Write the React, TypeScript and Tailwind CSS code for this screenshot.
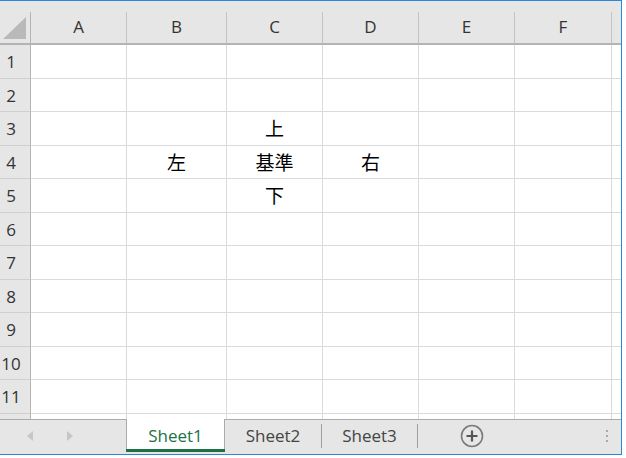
import React from "react";

const cols = [
  { l: "A", w: "w-[96px]" },
  { l: "B", w: "w-[100px]" },
  { l: "C", w: "w-[96px]" },
  { l: "D", w: "w-[96px]" },
  { l: "E", w: "w-[96px]" },
  { l: "F", w: "w-[97px]" },
];

const data: Record<string, string> = {
  "3C": "上",
  "4B": "左",
  "4C": "基準",
  "4D": "右",
  "5C": "下",
};

const latin = { fontFamily: '"Open Sans", "DejaVu Sans", sans-serif' };
const cjk = { fontFamily: '"Noto Sans CJK JP", "Noto Sans", sans-serif' };

export default function App() {
  const rows = Array.from({ length: 12 }, (_, i) => i + 1);
  return (
    <div className="w-[626px] h-[458px] bg-white overflow-hidden">
      <div className="w-[622px] h-[455px] border-t border-r border-b border-[#2b88d8] flex flex-col overflow-hidden">
        {/* column header */}
        <div className="flex h-[44px] shrink-0 bg-[#e6e6e6] border-b-2 border-[#b4b4b4]">
          <div className="w-[31px] shrink-0 flex">
            <div className="flex-1 flex items-start">
              <svg width="30" height="42" viewBox="0 0 30 42" className="shrink-0">
                <polygon points="3,38 26,38 26,16" fill="#b9b9b9" />
              </svg>
            </div>
            <div className="w-px h-[31px] self-end bg-[#b4b4b4]" />
          </div>
          {cols.map((c) => (
            <div key={c.l} className={`${c.w} shrink-0 flex`}>
              <div
                className="flex-1 flex items-center justify-center pt-[10px] text-[17px] text-[#333]"
                style={latin}
              >
                {c.l}
              </div>
              <div className="w-px h-[31px] self-end bg-[#c4c4c4]" />
            </div>
          ))}
          <div className="flex-1" />
        </div>

        {/* grid */}
        <div className="h-[374px] shrink-0 overflow-hidden flex flex-col">
          {rows.map((r) => (
            <div key={r} className="flex h-[33.5px] shrink-0">
              <div className="w-[31px] shrink-0 bg-[#e6e6e6] border-r border-b border-r-[#b4b4b4] border-b-[#cfcfcf] flex items-center">
                <div
                  className="w-[22px] text-center text-[17px] leading-none text-[#333] pt-[1px]"
                  style={latin}
                >
                  {r < 12 ? r : ""}
                </div>
              </div>
              {cols.map((c) => (
                <div
                  key={c.l}
                  className={`${c.w} shrink-0 border-r border-b border-[#dadada] flex items-center justify-center text-[19px] text-black`}
                  style={cjk}
                >
                  {data[`${r}${c.l}`] ?? ""}
                </div>
              ))}
              <div className="flex-1 border-b border-[#dadada]" />
            </div>
          ))}
        </div>

        {/* sheet tabs */}
        <div className="flex flex-1 bg-[#e6e6e6]" style={latin}>
          <div className="w-[126px] shrink-0 border-t border-[#ababab] flex items-center pb-[2px]">
            <svg width="8" height="10" viewBox="0 0 8 10" className="ml-[27px]">
              <polygon points="6,0 6,10 0,5" fill="#c6c6c6" />
            </svg>
            <svg width="8" height="10" viewBox="0 0 8 10" className="ml-[31px]">
              <polygon points="1,0 1,10 7,5" fill="#c6c6c6" />
            </svg>
          </div>
          <div className="w-[99px] shrink-0 flex flex-col mb-[2px]">
            <div className="flex-1 bg-white border-l border-r border-[#ababab] flex items-center justify-center text-[17px] text-[#217346] pt-[3px]">
              Sheet1
            </div>
            <div className="h-[3px] bg-[#1e7145]" />
          </div>
          <div className="flex-1 border-t border-[#ababab] flex items-center pb-[2px]">
            <div className="w-[96px] text-center text-[17px] text-[#444]">Sheet2</div>
            <div className="w-px h-[24px] bg-[#9f9f9f]" />
            <div className="w-[95px] text-center text-[17px] text-[#444]">Sheet3</div>
            <div className="w-px h-[24px] bg-[#9f9f9f]" />
            <div className="w-[108px] flex justify-center">
              <svg width="24" height="24" viewBox="0 0 24 24">
                <circle cx="12" cy="12" r="10.5" fill="none" stroke="#7a7a7a" strokeWidth="1.6" />
                <path d="M12 6.5v11M6.5 12h11" stroke="#555" strokeWidth="2.2" />
              </svg>
            </div>
            <div className="flex-1" />
            <div className="flex flex-col gap-[3px] mr-[13px]">
              <div className="w-[2px] h-[2px] bg-[#a8a8a8]" />
              <div className="w-[2px] h-[2px] bg-[#a8a8a8]" />
              <div className="w-[2px] h-[2px] bg-[#a8a8a8]" />
            </div>
          </div>
        </div>
      </div>
    </div>
  );
}
